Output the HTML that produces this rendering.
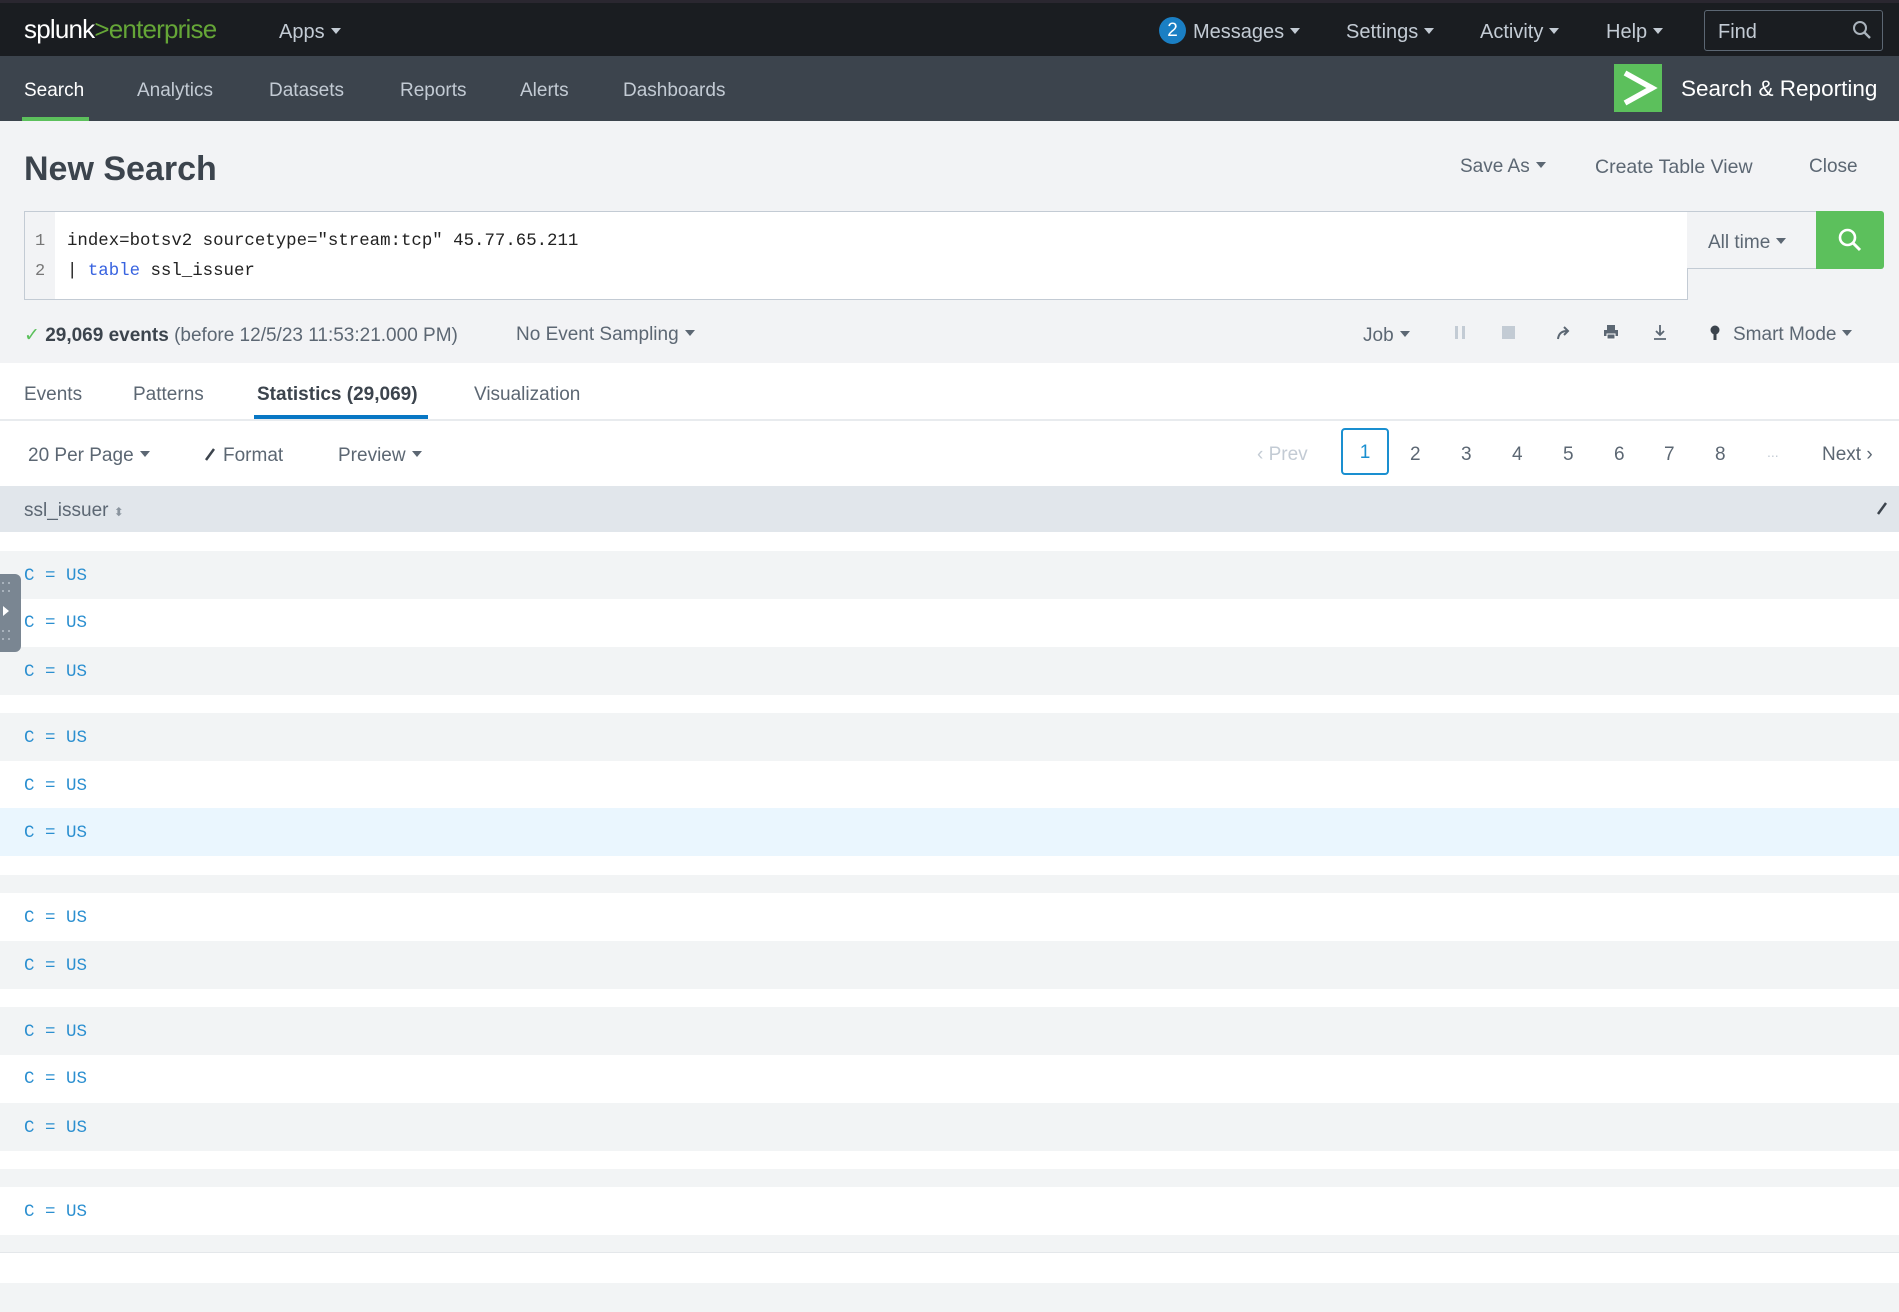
<!DOCTYPE html>
<html><head><meta charset="utf-8"><style>
*{margin:0;padding:0;box-sizing:border-box}
body{width:1899px;height:1312px;overflow:hidden;background:#fff;font-family:"Liberation Sans",sans-serif;position:relative}
.a{position:absolute;white-space:nowrap}
.top{position:absolute;left:0;top:0;width:1899px;height:56px;background:#1a1d21;border-top:3px solid #2a2730}
.nav{position:absolute;left:0;top:56px;width:1899px;height:65px;background:#3c444d}
.tw{color:#c3cbd4;font-size:20px;margin-top:3px}
.nw{color:#c3cbd4;font-size:19px;margin-top:2px}
.car{display:inline-block;width:0;height:0;border-left:5px solid transparent;border-right:5px solid transparent;border-top:6px solid currentColor;vertical-align:middle;margin-left:6px;margin-top:-3px}
.g{color:#5c6773;font-size:19px;margin-top:2px}
.row{position:absolute;left:0;width:1899px;height:48px}
.gr{background:#f2f4f5}
.bl{background:#eaf6fe}
.cu{position:absolute;left:24px;font-family:"Liberation Mono",monospace;font-size:17.5px;color:#2b8fd0;top:15px}
</style></head><body>
<div style="position:absolute;left:0;top:121px;width:1899px;height:242px;background:#f2f3f5"></div>
<div class="top"></div>
<div class="a" style="left:24px;top:14px;font-size:26px;color:#fff;letter-spacing:-0.8px">splunk<span style="color:#65a637">&gt;enterprise</span></div>
<div class="a tw" style="left:279px;top:18px">Apps<span class="car"></span></div>
<div class="a" style="left:1159px;top:17px;width:27px;height:27px;border-radius:50%;background:#1a7fc4;color:#fff;font-size:19px;text-align:center;line-height:27px">2</div>
<div class="a tw" style="left:1193px;top:18px">Messages<span class="car"></span></div>
<div class="a tw" style="left:1346px;top:18px">Settings<span class="car"></span></div>
<div class="a tw" style="left:1480px;top:18px">Activity<span class="car"></span></div>
<div class="a tw" style="left:1606px;top:18px">Help<span class="car"></span></div>
<div class="a" style="left:1704px;top:10px;width:179px;height:41px;border:1px solid #5c6773;border-radius:3px"></div>
<div class="a tw" style="left:1718px;top:18px">Find</div>
<svg class="a" style="left:1852px;top:20px" width="20" height="20" viewBox="0 0 20 20"><circle cx="8" cy="8" r="6" fill="none" stroke="#aab3bc" stroke-width="2"/><line x1="12.5" y1="12.5" x2="18" y2="18" stroke="#aab3bc" stroke-width="2.4"/></svg>
<div class="nav"></div>
<div class="a nw" style="left:24px;top:78px;color:#fff">Search</div>
<div class="a" style="left:22px;top:117px;width:67px;height:4px;background:#5cc05c"></div>
<div class="a nw" style="left:137px;top:78px">Analytics</div>
<div class="a nw" style="left:269px;top:78px">Datasets</div>
<div class="a nw" style="left:400px;top:78px">Reports</div>
<div class="a nw" style="left:520px;top:78px">Alerts</div>
<div class="a nw" style="left:623px;top:78px">Dashboards</div>
<div class="a" style="left:1614px;top:64px;width:48px;height:48px;background:#5cc05c"></div>
<svg class="a" style="left:1614px;top:64px" width="48" height="48" viewBox="0 0 48 48"><path d="M11 9 L38 24 L11 39" fill="none" stroke="#fff" stroke-width="5.5"/></svg>
<div class="a" style="left:1681px;top:76px;font-size:22.5px;color:#fff">Search &amp; Reporting</div>
<div class="a" style="left:24px;top:150px;font-size:34px;color:#3c444d;font-weight:bold">New Search</div>
<div class="a g" style="left:1460px;top:154px">Save As<span class="car"></span></div>
<div class="a g" style="left:1595px;top:154px;font-size:19.5px">Create Table View</div>
<div class="a g" style="left:1809px;top:154px">Close</div>
<div class="a" style="left:24px;top:211px;width:1664px;height:89px;background:#fff;border:1px solid #c3cbd4"></div>
<div class="a" style="left:25px;top:212px;width:30px;height:87px;background:#f2f3f5"></div>
<div class="a" style="left:35px;top:227px;font-family:'Liberation Mono',monospace;font-size:17px;color:#777;line-height:30px">1<br>2</div>
<div class="a" style="left:67px;top:227px;font-family:'Liberation Mono',monospace;font-size:17.4px;color:#222;line-height:30px">index=botsv2 sourcetype="stream:tcp" 45.77.65.211<br>| <span style="color:#3863e0">table</span> ssl_issuer</div>
<div class="a" style="left:1687px;top:211px;width:130px;height:58px;background:#f2f3f5;border:1px solid #c3cbd4;border-left:none"></div>
<div class="a g" style="left:1708px;top:230px">All time<span class="car"></span></div>
<div class="a" style="left:1816px;top:211px;width:68px;height:58px;background:#5cc05c;border-radius:0 3px 3px 0"></div>
<svg class="a" style="left:1837px;top:227px" width="26" height="26" viewBox="0 0 26 26"><circle cx="10.5" cy="10.5" r="7.5" fill="none" stroke="#fff" stroke-width="2.6"/><line x1="16" y1="16" x2="23" y2="23" stroke="#fff" stroke-width="3"/></svg>
<div class="a g" style="left:24px;top:322px;color:#3c444d"><span style="color:#5cc05c">✓</span> <b>29,069 events</b> <span style="color:#5c6773">(before 12/5/23 11:53:21.000 PM)</span></div>
<div class="a g" style="left:516px;top:322px">No Event Sampling<span class="car"></span></div>
<div class="a g" style="left:1363px;top:323px">Job<span class="car"></span></div>
<div class="a" style="left:1455px;top:326px;width:3px;height:13px;background:#c3cbd4"></div><div class="a" style="left:1462px;top:326px;width:3px;height:13px;background:#c3cbd4"></div>
<div class="a" style="left:1502px;top:326px;width:13px;height:13px;background:#c3cbd4"></div>
<svg class="a" style="left:1555px;top:324px" width="18" height="18" viewBox="0 0 18 18"><path d="M3 15 Q4 7 12 7 M9 3 L13 7 L9 11" fill="none" stroke="#5c6773" stroke-width="2"/></svg>
<svg class="a" style="left:1602px;top:323px" width="18" height="18" viewBox="0 0 18 18"><rect x="5" y="2" width="8" height="5" fill="#5c6773"/><rect x="2" y="7" width="14" height="6" fill="#5c6773"/><rect x="5" y="11" width="8" height="5" fill="#5c6773" stroke="#fff" stroke-width="1"/></svg>
<svg class="a" style="left:1651px;top:323px" width="18" height="18" viewBox="0 0 18 18"><path d="M9 2 V12 M5 8 L9 12 L13 8 M3 16 H15" fill="none" stroke="#5c6773" stroke-width="1.8"/></svg>
<svg class="a" style="left:1709px;top:324px" width="12" height="18" viewBox="0 0 12 18"><circle cx="6" cy="6" r="4.5" fill="#3c444d"/><rect x="4.5" y="9" width="3" height="7" fill="#3c444d"/></svg>
<div class="a g" style="left:1733px;top:322px">Smart Mode<span class="car"></span></div>
<div class="a g" style="left:24px;top:382px">Events</div>
<div class="a g" style="left:133px;top:382px">Patterns</div>
<div class="a g" style="left:257px;top:382px;color:#3c444d;font-weight:bold">Statistics (29,069)</div>
<div class="a" style="left:254px;top:415px;width:174px;height:4px;background:#0877c4"></div>
<div class="a g" style="left:474px;top:382px">Visualization</div>
<div class="a" style="left:0;top:419px;width:1899px;height:2px;background:#e8ebee"></div>
<div class="a g" style="left:28px;top:443px">20 Per Page<span class="car"></span></div>
<svg class="a" style="left:203px;top:446px" width="14" height="16" viewBox="0 0 14 16"><path d="M3 14 L11 3" stroke="#3c444d" stroke-width="2.5"/></svg>
<div class="a g" style="left:223px;top:443px">Format</div>
<div class="a g" style="left:338px;top:443px">Preview<span class="car"></span></div>
<div class="a g" style="left:1257px;top:442px;color:#c3cbd4">‹ Prev</div>
<div class="a" style="left:1341px;top:428px;width:48px;height:47px;border:2px solid #1a8fd0;border-radius:4px;color:#1a8fd0;font-size:19px;text-align:center;line-height:45px">1</div>
<div class="a g" style="left:1410px;top:442px">2</div>
<div class="a g" style="left:1461px;top:442px">3</div>
<div class="a g" style="left:1512px;top:442px">4</div>
<div class="a g" style="left:1563px;top:442px">5</div>
<div class="a g" style="left:1614px;top:442px">6</div>
<div class="a g" style="left:1664px;top:442px">7</div>
<div class="a g" style="left:1715px;top:442px">8</div>
<div class="a g" style="left:1767px;top:442px;color:#c3cbd4;font-size:14px">...</div>
<div class="a g" style="left:1822px;top:442px">Next ›</div>
<div class="a" style="left:0;top:486px;width:1899px;height:46px;background:#e1e6eb"></div>
<div class="a g" style="left:24px;top:498px">ssl_issuer <span style="font-size:12px;color:#8a949e">⬍</span></div>
<svg class="a" style="left:1875px;top:500px" width="14" height="16" viewBox="0 0 14 16"><path d="M3 14 L11 3" stroke="#3c444d" stroke-width="2.5"/></svg>
<div class="row gr" style="top:551px"><span class="cu">C = US</span></div>
<div class="row" style="top:598px"><span class="cu">C = US</span></div>
<div class="row gr" style="top:647px"><span class="cu">C = US</span></div>
<div class="row gr" style="top:713px"><span class="cu">C = US</span></div>
<div class="row" style="top:761px"><span class="cu">C = US</span></div>
<div class="row bl" style="top:808px"><span class="cu">C = US</span></div>
<div class="row gr" style="top:875px;height:18px"></div>
<div class="row" style="top:893px"><span class="cu">C = US</span></div>
<div class="row gr" style="top:941px"><span class="cu">C = US</span></div>
<div class="row gr" style="top:1007px"><span class="cu">C = US</span></div>
<div class="row" style="top:1054px"><span class="cu">C = US</span></div>
<div class="row gr" style="top:1103px"><span class="cu">C = US</span></div>
<div class="row gr" style="top:1169px;height:18px"></div>
<div class="row" style="top:1187px"><span class="cu">C = US</span></div>
<div class="row gr" style="top:1235px;height:18px;border-bottom:1px solid #e4e7ea"></div>
<div class="row gr" style="top:1283px;height:29px"></div>
<div class="a" style="left:0;top:574px;width:21px;height:78px;background:#7a8692;border-radius:0 6px 6px 0"></div>
<svg class="a" style="left:0;top:574px" width="21" height="78" viewBox="0 0 21 78"><g fill="#a8b2bc"><rect x="2" y="8" width="2" height="2"/><rect x="8" y="8" width="2" height="2"/><rect x="2" y="16" width="2" height="2"/><rect x="8" y="16" width="2" height="2"/><rect x="2" y="56" width="2" height="2"/><rect x="8" y="56" width="2" height="2"/><rect x="2" y="64" width="2" height="2"/><rect x="8" y="64" width="2" height="2"/></g><path d="M3 32 L9 37 L3 42Z" fill="#fff"/></svg>
</body></html>
